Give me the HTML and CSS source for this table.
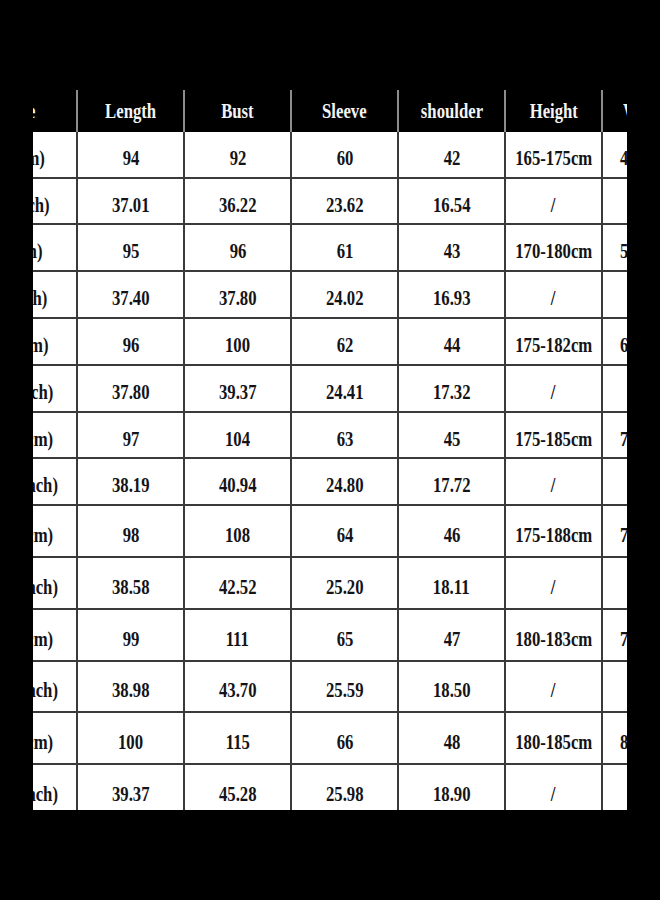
FILE: index.html
```html
<!DOCTYPE html>
<html lang="en">
<head>
<meta charset="utf-8">
<title>Size chart</title>
<link rel="stylesheet" href="styles.css">
</head>
<body>
<div class="clip">
  <div class="sheet">
    <div class="c h"><span class="t">Size</span></div>
    <div class="c h"><span class="t">Length</span></div>
    <div class="c h"><span class="t">Bust</span></div>
    <div class="c h"><span class="t">Sleeve</span></div>
    <div class="c h"><span class="t">shoulder</span></div>
    <div class="c h"><span class="t">Height</span></div>
    <div class="c h"><span class="t">Weight</span></div>

    <div class="c"><span class="t">M(cm)</span></div>
    <div class="c"><span class="t">94</span></div>
    <div class="c"><span class="t">92</span></div>
    <div class="c"><span class="t">60</span></div>
    <div class="c"><span class="t">42</span></div>
    <div class="c"><span class="t">165-175cm</span></div>
    <div class="c"><span class="t">45-55kg</span></div>

    <div class="c"><span class="t">M(inch)</span></div>
    <div class="c"><span class="t">37.01</span></div>
    <div class="c"><span class="t">36.22</span></div>
    <div class="c"><span class="t">23.62</span></div>
    <div class="c"><span class="t">16.54</span></div>
    <div class="c"><span class="t">/</span></div>
    <div class="c"><span class="t">/</span></div>

    <div class="c"><span class="t">L(cm)</span></div>
    <div class="c"><span class="t">95</span></div>
    <div class="c"><span class="t">96</span></div>
    <div class="c"><span class="t">61</span></div>
    <div class="c"><span class="t">43</span></div>
    <div class="c"><span class="t">170-180cm</span></div>
    <div class="c"><span class="t">55-65kg</span></div>

    <div class="c"><span class="t">L(inch)</span></div>
    <div class="c"><span class="t">37.40</span></div>
    <div class="c"><span class="t">37.80</span></div>
    <div class="c"><span class="t">24.02</span></div>
    <div class="c"><span class="t">16.93</span></div>
    <div class="c"><span class="t">/</span></div>
    <div class="c"><span class="t">/</span></div>

    <div class="c"><span class="t">XL(cm)</span></div>
    <div class="c"><span class="t">96</span></div>
    <div class="c"><span class="t">100</span></div>
    <div class="c"><span class="t">62</span></div>
    <div class="c"><span class="t">44</span></div>
    <div class="c"><span class="t">175-182cm</span></div>
    <div class="c"><span class="t">65-75kg</span></div>

    <div class="c"><span class="t">XL(inch)</span></div>
    <div class="c"><span class="t">37.80</span></div>
    <div class="c"><span class="t">39.37</span></div>
    <div class="c"><span class="t">24.41</span></div>
    <div class="c"><span class="t">17.32</span></div>
    <div class="c"><span class="t">/</span></div>
    <div class="c"><span class="t">/</span></div>

    <div class="c"><span class="t">2XL(cm)</span></div>
    <div class="c"><span class="t">97</span></div>
    <div class="c"><span class="t">104</span></div>
    <div class="c"><span class="t">63</span></div>
    <div class="c"><span class="t">45</span></div>
    <div class="c"><span class="t">175-185cm</span></div>
    <div class="c"><span class="t">70-80kg</span></div>

    <div class="c"><span class="t">2XL(inch)</span></div>
    <div class="c"><span class="t">38.19</span></div>
    <div class="c"><span class="t">40.94</span></div>
    <div class="c"><span class="t">24.80</span></div>
    <div class="c"><span class="t">17.72</span></div>
    <div class="c"><span class="t">/</span></div>
    <div class="c"><span class="t">/</span></div>

    <div class="c"><span class="t">3XL(cm)</span></div>
    <div class="c"><span class="t">98</span></div>
    <div class="c"><span class="t">108</span></div>
    <div class="c"><span class="t">64</span></div>
    <div class="c"><span class="t">46</span></div>
    <div class="c"><span class="t">175-188cm</span></div>
    <div class="c"><span class="t">75-85kg</span></div>

    <div class="c"><span class="t">3XL(inch)</span></div>
    <div class="c"><span class="t">38.58</span></div>
    <div class="c"><span class="t">42.52</span></div>
    <div class="c"><span class="t">25.20</span></div>
    <div class="c"><span class="t">18.11</span></div>
    <div class="c"><span class="t">/</span></div>
    <div class="c"><span class="t">/</span></div>

    <div class="c"><span class="t">4XL(cm)</span></div>
    <div class="c"><span class="t">99</span></div>
    <div class="c"><span class="t">111</span></div>
    <div class="c"><span class="t">65</span></div>
    <div class="c"><span class="t">47</span></div>
    <div class="c"><span class="t">180-183cm</span></div>
    <div class="c"><span class="t">78-88kg</span></div>

    <div class="c"><span class="t">4XL(inch)</span></div>
    <div class="c"><span class="t">38.98</span></div>
    <div class="c"><span class="t">43.70</span></div>
    <div class="c"><span class="t">25.59</span></div>
    <div class="c"><span class="t">18.50</span></div>
    <div class="c"><span class="t">/</span></div>
    <div class="c"><span class="t">/</span></div>

    <div class="c"><span class="t">5XL(cm)</span></div>
    <div class="c"><span class="t">100</span></div>
    <div class="c"><span class="t">115</span></div>
    <div class="c"><span class="t">66</span></div>
    <div class="c"><span class="t">48</span></div>
    <div class="c"><span class="t">180-185cm</span></div>
    <div class="c"><span class="t">85-95kg</span></div>

    <div class="c"><span class="t">5XL(inch)</span></div>
    <div class="c"><span class="t">39.37</span></div>
    <div class="c"><span class="t">45.28</span></div>
    <div class="c"><span class="t">25.98</span></div>
    <div class="c"><span class="t">18.90</span></div>
    <div class="c"><span class="t">/</span></div>
    <div class="c"><span class="t">/</span></div>
  </div>
</div>
</body>
</html>
```

FILE: styles.css
```css
html, body {
  margin: 0;
  padding: 0;
  background: #000;
}

body {
  width: 660px;
  height: 900px;
  overflow: hidden;
  padding-top: 90px;
  box-sizing: border-box;
  font-family: "Liberation Serif", "Times New Roman", serif;
}

.clip {
  margin-left: 33px;
  width: 594px;
  height: 720px;
  overflow: hidden;
  background: #000;
}

.sheet {
  margin-left: -67px;
  display: grid;
  grid-template-columns: 112px 107px 107px 107px 107px 97px 93px;
  grid-template-rows: 42px 47px 46px 47px 47px 47px 47px 46px 47px 52px 52px 52px 51px 52px 52px;
  width: max-content;
}

.c {
  box-sizing: border-box;
  display: flex;
  align-items: center;
  justify-content: center;
  background: #fff;
  color: #141418;
  border-right: 2px solid #3a3a3a;
  border-bottom: 2px solid #3a3a3a;
  padding-top: 7px;
  font-size: 22px;
  font-weight: bold;
  white-space: nowrap;
  overflow: hidden;
}

.c.h {
  background: #000;
  color: #f4f4f4;
  border-bottom: none;
  border-right: 2px solid #8c8c8c;
  padding-top: 0;
}

.t {
  display: inline-block;
  transform: scaleX(0.76);
  line-height: 1;
}
```
